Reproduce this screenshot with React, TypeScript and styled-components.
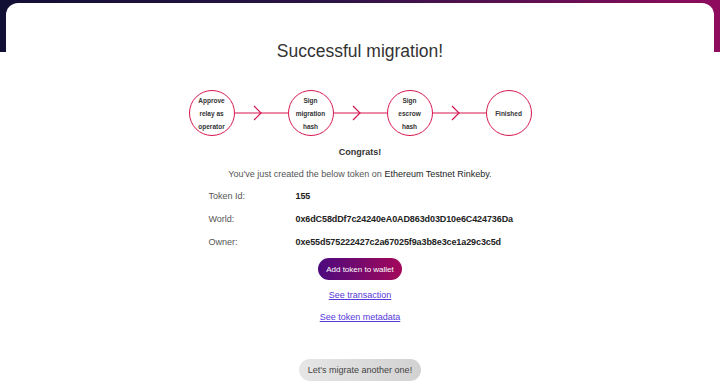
import styled, { createGlobalStyle } from 'styled-components'

const GlobalStyle = createGlobalStyle`
  html, body {
    margin: 0;
    padding: 0;
    background: #ffffff;
    font-family: "Liberation Sans", Arial, sans-serif;
  }
`

const ACCENT = '#d6174f'

const Page = styled.div`
  position: relative;
  width: 720px;
  height: 392px;
  overflow: hidden;
  background: linear-gradient(
      to right,
      #120f35 0%,
      #2a1445 45%,
      #8f0b5e 100%
    )
    top / 100% 52px no-repeat,
    #ffffff;
  padding: 3px 6px 0;
  box-sizing: border-box;
`

const Card = styled.main`
  background: #ffffff;
  border-radius: 12px 12px 0 0;
  height: 100%;
  display: flex;
  flex-direction: column;
  align-items: center;
  padding-top: 37px;
  box-sizing: border-box;
  color: #333;
`

const Title = styled.h1`
  margin: 0;
  font-family: "Liberation Sans", Arial, sans-serif;
  font-weight: 400;
  font-size: 17.5px;
  line-height: 22px;
  color: #333;
`

const Steps = styled.div`
  display: flex;
  align-items: center;
  margin-top: 28px;
`

const Step = styled.div`
  width: 46px;
  height: 46px;
  box-sizing: border-box;
  border: 1.3px solid ${ACCENT};
  border-radius: 50%;
  display: flex;
  align-items: center;
  justify-content: center;
  text-align: center;
  font-size: 6.5px;
  font-weight: 700;
  line-height: 13px;
  color: #333;
`

const Connector = styled.svg`
  display: block;
  width: 53px;
  height: 16px;
`

const Congrats = styled.div`
  margin-top: 11px;
  font-size: 9px;
  font-weight: 700;
  color: #333;
`

const Intro = styled.p`
  margin: 12px 0 0;
  font-size: 9px;
  color: #555;

  strong {
    font-weight: 400;
    color: #1e1e1e;
  }
`

const Details = styled.dl`
  margin: 12px 0 0;
  display: grid;
  grid-template-columns: 87px 222px;
  row-gap: 12px;
  font-size: 9px;
  line-height: 11px;
  transform: translateX(3px);
`

const Label = styled.dt`
  color: #555;
`

const Value = styled.dd`
  margin: 0;
  color: #222;
  font-weight: 700;
  letter-spacing: -0.1px;
`

const WalletButton = styled.button`
  margin-top: 10px;
  height: 22px;
  padding: 0 8px;
  border: none;
  border-radius: 11px;
  background: linear-gradient(to right, #4c0a7e, #a3085a);
  color: #fff;
  font-family: "Liberation Sans", Arial, sans-serif;
  font-size: 8px;
  cursor: pointer;
`

const Link = styled.a`
  margin-top: 9px;
  font-size: 9px;
  line-height: 13px;
  color: #5638dc;
  text-decoration: underline;
  cursor: pointer;
`

const AgainButton = styled.button`
  margin-top: 35px;
  height: 22px;
  padding: 0 9px;
  border: none;
  border-radius: 11px;
  background: linear-gradient(to right, #e6e6e6, #d2d2d2);
  color: #444;
  font-family: "Liberation Sans", Arial, sans-serif;
  font-size: 9px;
  cursor: pointer;
`

const Arrow = () => (
  <Connector viewBox="0 0 53 16">
    <line x1="0" y1="8" x2="53" y2="8" stroke={ACCENT} strokeWidth="1.2" />
    <polyline
      points="19,1 26,8 19,15"
      fill="none"
      stroke={ACCENT}
      strokeWidth="1.2"
    />
  </Connector>
)

const steps = [
  ['Approve', 'relay as', 'operator'],
  ['Sign', 'migration', 'hash'],
  ['Sign', 'escrow', 'hash'],
  ['Finished'],
]

export default function App() {
  return (
    <>
      <GlobalStyle />
      <Page>
        <Card>
          <Title>Successful migration!</Title>
          <Steps>
            {steps.map((lines, i) => (
              <>
                {i > 0 && <Arrow key={`a${i}`} />}
                <Step key={i}>
                  <span>
                    {lines.map((l, j) => (
                      <div key={j}>{l}</div>
                    ))}
                  </span>
                </Step>
              </>
            ))}
          </Steps>
          <Congrats>Congrats!</Congrats>
          <Intro>
            You've just created the below token on{' '}
            <strong>Ethereum Testnet Rinkeby</strong>.
          </Intro>
          <Details>
            <Label>Token Id:</Label>
            <Value>155</Value>
            <Label>World:</Label>
            <Value>0x6dC58dDf7c24240eA0AD863d03D10e6C424736Da</Value>
            <Label>Owner:</Label>
            <Value>0xe55d575222427c2a67025f9a3b8e3ce1a29c3c5d</Value>
          </Details>
          <WalletButton>Add token to wallet</WalletButton>
          <Link>See transaction</Link>
          <Link>See token metadata</Link>
          <AgainButton>Let's migrate another one!</AgainButton>
        </Card>
      </Page>
    </>
  )
}
